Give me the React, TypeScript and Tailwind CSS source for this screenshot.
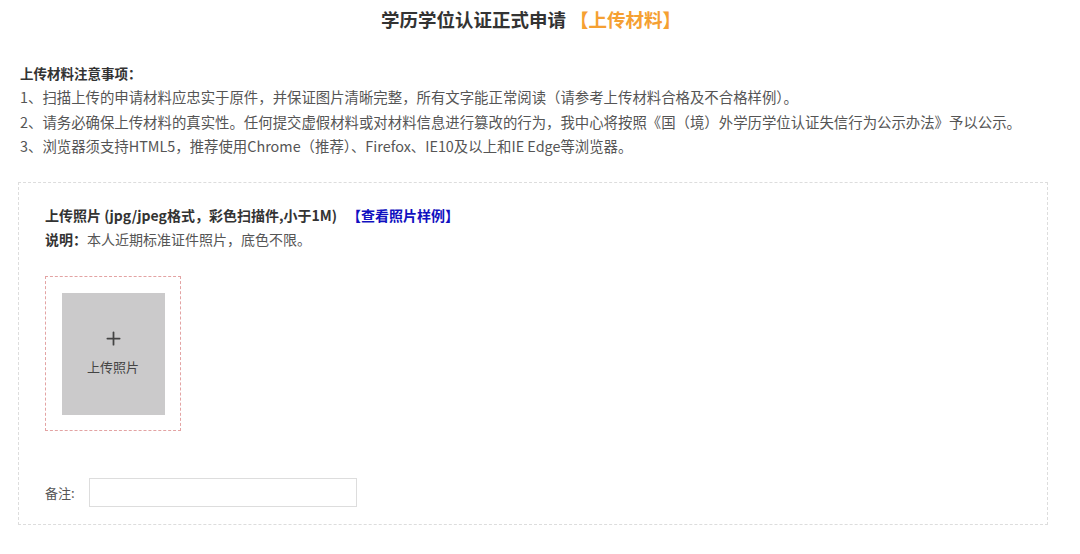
import { Plus } from 'lucide-react'

const FONT = { fontFamily: '"Noto Sans CJK SC", "Noto Sans", sans-serif' }

const notices = [
  '1、扫描上传的申请材料应忠实于原件，并保证图片清晰完整，所有文字能正常阅读（请参考上传材料合格及不合格样例）。',
  '2、请务必确保上传材料的真实性。任何提交虚假材料或对材料信息进行篡改的行为，我中心将按照《国（境）外学历学位认证失信行为公示办法》予以公示。',
  '3、浏览器须支持HTML5，推荐使用Chrome（推荐）、Firefox、IE10及以上和IE Edge等浏览器。',
]

export default function App() {
  return (
    <div className="w-[1080px] h-[554px] bg-white text-[#555]" style={FONT}>
      {/* Title */}
      <div className="pt-[6px] pr-[18px] h-[40px] text-center text-[18.5px] font-bold text-[#333] leading-[26px]">
        学历学位认证正式申请 <span className="text-[#f5a032]">【上传材料】</span>
      </div>

      {/* Notices */}
      <div className="px-[20px] pt-[21px] text-[14.4px] leading-[24.3px]">
        <div className="font-bold text-[#333] text-[13.5px]">上传材料注意事项：</div>
        {notices.map((line) => (
          <div key={line}>{line}</div>
        ))}
      </div>

      {/* Upload panel */}
      <div className="mx-[18px] mt-[24px] w-[1030px] h-[343px] border border-dashed border-[#ddd] px-[26px] pt-[20px]">
        <div className="text-[14px] leading-[24px] font-bold text-[#333]">
          上传照片 (jpg/jpeg格式，彩色扫描件,小于1M)
          <span className="ml-[10px] text-[#1010c0]">【查看照片样例】</span>
        </div>
        <div className="text-[14px] leading-[24px]">
          <span className="font-bold text-[#333]">说明：</span>本人近期标准证件照片，底色不限。
        </div>

        <div className="mt-[25px] w-[136px] h-[155px] border border-dashed border-[#e3a3a3] flex items-center justify-center">
          <div className="w-[103px] h-[122px] bg-[#cbcacb] flex flex-col items-center justify-center text-[#444]">
            <Plus size={21} strokeWidth={2} className="-mt-[2px]" />
            <div className="text-[13px] mt-[8px]">上传照片</div>
          </div>
        </div>

        <div className="mt-[47px] flex items-center text-[13px]">
          <span className="w-[44px]">备注:</span>
          <div className="w-[268px] h-[29px] border border-[#ddd] bg-white" />
        </div>
      </div>
    </div>
  )
}
